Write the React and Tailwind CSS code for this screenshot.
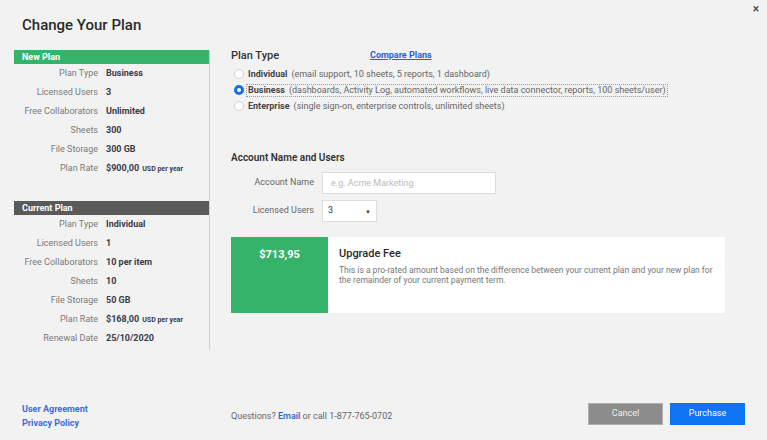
import React from "react"

const newPlan = [
  ["Plan Type", "Business"],
  ["Licensed Users", "3"],
  ["Free Collaborators", "Unlimited"],
  ["Sheets", "300"],
  ["File Storage", "300 GB"],
  ["Plan Rate", "$900,00", true],
]

const currentPlan = [
  ["Plan Type", "Individual"],
  ["Licensed Users", "1"],
  ["Free Collaborators", "10 per item"],
  ["Sheets", "10"],
  ["File Storage", "50 GB"],
  ["Plan Rate", "$168,00", true],
  ["Renewal Date", "25/10/2020"],
]

const plans = [
  { name: "Individual", desc: "(email support, 10 sheets, 5 reports, 1 dashboard)" },
  { name: "Business", desc: "(dashboards, Activity Log, automated workflows, live data connector, reports, 100 sheets/user)", checked: true },
  { name: "Enterprise", desc: "(single sign-on, enterprise controls, unlimited sheets)" },
]

const PlanRows = ({ rows }) => (
  <div>
    {rows.map(([label, value, rate]) => (
      <div key={label} className="flex items-center h-[19px] text-[9px]">
        <span className="w-[84px] text-right text-[#7a7a7a]">{label}</span>
        <span className="ml-[8px] font-bold text-[#3a3a4a]">
          {value}
          {rate && <span className="text-[7px] ml-[3px]">USD per year</span>}
        </span>
      </div>
    ))}
  </div>
)

const App = () => {
  return (
    <div className="relative w-[767px] h-[440px] bg-[#f2f2f2] flex flex-col font-['Roboto',sans-serif] text-[#333]">
      <button className="absolute top-[3px] right-[8px] text-[12px] font-bold text-[#555] leading-none">×</button>

      {/* header */}
      <div className="h-[50px] pl-[22px] pt-[16px]">
        <h1 className="text-[15px] font-medium text-[#2a2a2a] leading-[18px]">Change Your Plan</h1>
      </div>

      {/* body */}
      <div className="flex h-[300px]">
        {/* left summary */}
        <div className="ml-[14px] w-[196px] border-r border-[#cfcfcf]">
          <div className="h-[14px] bg-[#36b36b] text-white text-[9px] font-bold pl-[8px] leading-[14px]">New Plan</div>
          <PlanRows rows={newPlan} />
          <div className="h-[14px] mt-[23px] bg-[#5a5a5a] text-white text-[9px] font-bold pl-[8px] leading-[14px]">Current Plan</div>
          <PlanRows rows={currentPlan} />
        </div>

        {/* right form */}
        <div className="pl-[21px] flex-1">
          <div className="flex items-center h-[12px]">
            <span className="w-[139px] text-[11px] font-medium text-[#333]">Plan Type</span>
            <a href="#" className="text-[9px] font-bold text-[#2563c9] underline">Compare Plans</a>
          </div>

          <div className="mt-[4px]">
            {plans.map((p) => (
              <div key={p.name} className="flex items-center h-[16px] text-[9px]">
                <span
                  className={
                    p.checked
                      ? "ml-[3px] w-[10px] h-[10px] rounded-full border-[3px] border-[#1a6fe0] bg-white"
                      : "ml-[3px] w-[10px] h-[10px] rounded-full border border-[#cfcfcf] bg-white"
                  }
                />
                <span
                  className={
                    p.checked
                      ? "ml-[2px] px-[1px] border border-dotted border-[#999] leading-[11px]"
                      : "ml-[2px] px-[1px] border border-transparent leading-[11px]"
                  }
                >
                  <span className="font-bold text-[#444]">{p.name}</span>
                  <span className="ml-[4px] text-[#666]">{p.desc}</span>
                </span>
              </div>
            ))}
          </div>

          <h2 className="mt-[38px] h-[12px] leading-[12px] text-[10px] font-semibold text-[#333]">Account Name and Users</h2>

          <div className="flex items-center mt-[8px]">
            <label className="w-[83px] text-right text-[9px] text-[#666]">Account Name</label>
            <input
              placeholder="e.g. Acme Marketing"
              className="ml-[8px] w-[174px] h-[22px] bg-white border border-[#ddd] px-[8px] text-[9px] placeholder:text-[#bbb] outline-none"
            />
          </div>

          <div className="flex items-center mt-[6px]">
            <label className="w-[83px] text-right text-[9px] text-[#666]">Licensed Users</label>
            <div className="ml-[8px] w-[55px] h-[22px] bg-white border border-[#ddd] flex items-center justify-between px-[5px] text-[9px] text-[#333]">
              <span>3</span>
              <span className="text-[6px] text-[#444]">▼</span>
            </div>
          </div>

          <div className="mt-[15px] w-[494px] h-[76px] flex bg-white">
            <div className="w-[97px] shrink-0 bg-[#36b36b] text-white text-[11px] font-bold text-center pt-[10px]">$713,95</div>
            <div className="pl-[11px] pr-[12px] pt-[10px]">
              <div className="text-[11px] font-medium text-[#2a2a2a] leading-[14px]">Upgrade Fee</div>
              <p className="mt-[4px] text-[8.5px] leading-[10px] text-[#777]">
                This is a pro-rated amount based on the difference between your current plan and your new plan for the remainder of your current payment term.
              </p>
            </div>
          </div>
        </div>
      </div>

      {/* footer */}
      <div className="flex items-start pl-[22px] pr-[22px] pt-[52px]">
        <div className="w-[209px] flex flex-col text-[9px] font-bold text-[#3b6fd6] leading-[14px]">
          <a href="#">User Agreement</a>
          <a href="#">Privacy Policy</a>
        </div>
        <div className="flex-1 mt-[7px] text-[9px] text-[#666] leading-[14px]">
          Questions? <a href="#" className="text-[#2563c9] font-medium">Email</a> or call 1-877-765-0702
        </div>
        <div className="flex gap-[7px] mt-[1px]">
          <button className="w-[75px] h-[22px] bg-[#8c8c8c] border border-[#b0b0b0] text-[#eee] text-[9px]">Cancel</button>
          <button className="w-[75px] h-[22px] bg-[#0d74f2] text-white text-[9px]">Purchase</button>
        </div>
      </div>
    </div>
  )
}

export default App
